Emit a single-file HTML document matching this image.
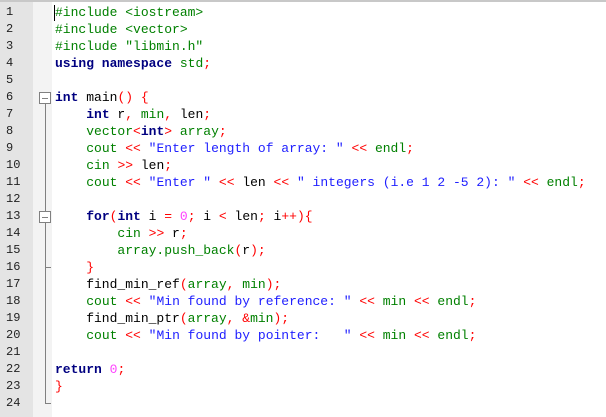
<!DOCTYPE html>
<html><head><style>
body{margin:0;width:606px;height:417px;background:#fff;overflow:hidden;position:relative;font-family:"Liberation Mono","Courier New",monospace;font-size:13px}
#top{position:absolute;left:0;top:0;width:606px;height:2px;background:#c8c8c8}
#ln{position:absolute;left:0;top:2px;width:33px;height:415px;background:#e4e4e4}
#fm{position:absolute;left:33px;top:2px;width:19px;height:415px;background:#f3f3f3}
.r{position:absolute;left:0;height:17px;line-height:17px;white-space:pre}
.n{left:6px;color:#222;font-size:12px}
.c{left:55px}
.k{color:#000080;font-weight:bold}
.g{color:#008000}
.o{color:#ff0000}
.s{color:#2020ff}
.d{color:#ff40ff}
.b{color:#000}
.box{position:absolute;left:39px;width:10px;height:10px;border:1px solid #808080;background:#fff}
.box:after{content:"";position:absolute;left:2px;top:4.5px;width:6px;height:1px;background:#808080}
.vl{position:absolute;left:45px;width:1px;background:#808080}
.tk{position:absolute;left:45px;width:6px;height:1px;background:#808080}
#cur{position:absolute;left:54px;top:5px;width:1px;height:16px;background:#000}
</style></head><body>
<div id="top"></div><div id="ln"></div><div id="fm"></div>
<div class="vl" style="top:104px;height:300px"></div>
<div class="box" style="top:92px"></div>
<div class="box" style="top:211px"></div>
<div class="tk" style="top:267px"></div>
<div class="tk" style="top:403px"></div>
<div id="cur"></div>

<div class="r n" style="top:4px">1</div>
<div class="r n" style="top:21px">2</div>
<div class="r n" style="top:38px">3</div>
<div class="r n" style="top:55px">4</div>
<div class="r n" style="top:72px">5</div>
<div class="r n" style="top:89px">6</div>
<div class="r n" style="top:106px">7</div>
<div class="r n" style="top:123px">8</div>
<div class="r n" style="top:140px">9</div>
<div class="r n" style="top:157px">10</div>
<div class="r n" style="top:174px">11</div>
<div class="r n" style="top:191px">12</div>
<div class="r n" style="top:208px">13</div>
<div class="r n" style="top:225px">14</div>
<div class="r n" style="top:242px">15</div>
<div class="r n" style="top:259px">16</div>
<div class="r n" style="top:276px">17</div>
<div class="r n" style="top:293px">18</div>
<div class="r n" style="top:310px">19</div>
<div class="r n" style="top:327px">20</div>
<div class="r n" style="top:344px">21</div>
<div class="r n" style="top:361px">22</div>
<div class="r n" style="top:378px">23</div>
<div class="r n" style="top:395px">24</div>

<div class="r c g" style="top:4px">#include &lt;iostream&gt;</div>
<div class="r c g" style="top:21px">#include &lt;vector&gt;</div>
<div class="r c g" style="top:38px">#include "libmin.h"</div>
<div class="r c" style="top:55px"><span class="k">using namespace</span> <span class="g">std</span><span class="o">;</span></div>
<div class="r c" style="top:89px"><span class="k">int</span> <span class="b">main</span><span class="o">() {</span></div>
<div class="r c" style="top:106px">    <span class="k">int</span> r<span class="o">,</span> <span class="g">min</span><span class="o">,</span> len<span class="o">;</span></div>
<div class="r c" style="top:123px">    <span class="g">vector</span><span class="o">&lt;</span><span class="k">int</span><span class="o">&gt;</span> <span class="g">array</span><span class="o">;</span></div>
<div class="r c" style="top:140px">    <span class="g">cout</span> <span class="o">&lt;&lt;</span> <span class="s">"Enter length of array: "</span> <span class="o">&lt;&lt;</span> <span class="g">endl</span><span class="o">;</span></div>
<div class="r c" style="top:157px">    <span class="g">cin</span> <span class="o">&gt;&gt;</span> len<span class="o">;</span></div>
<div class="r c" style="top:174px">    <span class="g">cout</span> <span class="o">&lt;&lt;</span> <span class="s">"Enter "</span> <span class="o">&lt;&lt;</span> len <span class="o">&lt;&lt;</span> <span class="s">" integers (i.e 1 2 -5 2): "</span> <span class="o">&lt;&lt;</span> <span class="g">endl</span><span class="o">;</span></div>
<div class="r c" style="top:208px">    <span class="k">for</span><span class="o">(</span><span class="k">int</span> i <span class="o">=</span> <span class="d">0</span><span class="o">;</span> i <span class="o">&lt;</span> len<span class="o">;</span> i<span class="o">++){</span></div>
<div class="r c" style="top:225px">        <span class="g">cin</span> <span class="o">&gt;&gt;</span> r<span class="o">;</span></div>
<div class="r c" style="top:242px">        <span class="g">array.push_back</span><span class="o">(</span>r<span class="o">);</span></div>
<div class="r c" style="top:259px">    <span class="o">}</span></div>
<div class="r c" style="top:276px">    find_min_ref<span class="o">(</span><span class="g">array</span><span class="o">,</span> <span class="g">min</span><span class="o">);</span></div>
<div class="r c" style="top:293px">    <span class="g">cout</span> <span class="o">&lt;&lt;</span> <span class="s">"Min found by reference: "</span> <span class="o">&lt;&lt;</span> <span class="g">min</span> <span class="o">&lt;&lt;</span> <span class="g">endl</span><span class="o">;</span></div>
<div class="r c" style="top:310px">    find_min_ptr<span class="o">(</span><span class="g">array</span><span class="o">, &amp;</span><span class="g">min</span><span class="o">);</span></div>
<div class="r c" style="top:327px">    <span class="g">cout</span> <span class="o">&lt;&lt;</span> <span class="s">"Min found by pointer:   "</span> <span class="o">&lt;&lt;</span> <span class="g">min</span> <span class="o">&lt;&lt;</span> <span class="g">endl</span><span class="o">;</span></div>
<div class="r c" style="top:361px"><span class="k">return</span> <span class="d">0</span><span class="o">;</span></div>
<div class="r c" style="top:378px"><span class="o">}</span></div>
</body></html>
